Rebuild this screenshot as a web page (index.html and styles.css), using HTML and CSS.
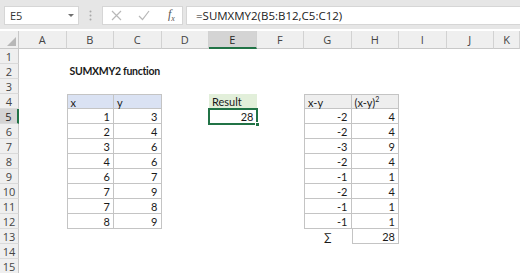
FILE: index.html
```html
<!DOCTYPE html>
<html lang="en">
<head>
  <meta charset="UTF-8" />
  <title>SUMXMY2 function</title>
  <link rel="stylesheet" href="styles.css">
</head>
<body>
  <div class="toolbar">
    <div class="namebox">
      <span>E5</span>
      <span class="caret"></span>
    </div>
    <svg class="grip" width="3" height="11" viewBox="0 0 3 11">
      <circle cx="1.5" cy="1.5" r="1" fill="#a8a8a8"/>
      <circle cx="1.5" cy="5.5" r="1" fill="#a8a8a8"/>
      <circle cx="1.5" cy="9.5" r="1" fill="#a8a8a8"/>
    </svg>
    <div class="fx-box">
      <svg width="11" height="11" viewBox="0 0 11 11">
        <path d="M1 1 L10 10 M10 1 L1 10" stroke="#b8b8b8" stroke-width="1.2" fill="none"/>
      </svg>
      <svg width="12" height="11" viewBox="0 0 12 11">
        <path d="M1 6 L4.5 9.5 L11 1" stroke="#b8b8b8" stroke-width="1.2" fill="none"/>
      </svg>
      <span class="fx">f<sub>x</sub></span>
    </div>
    <div class="formula">=SUMXMY2(B5:B12,C5:C12)</div>
  </div>

  <div class="sheet" id="sheet"></div>

  <script>
    const cols = ['A','B','C','D','E','F','G','H','I','J','K'];
    const B = [1,2,3,4,6,7,7,8];
    const C = [3,4,6,6,7,9,8,9];
    const cells = {
      B2: ['SUMXMY2 function','title'],
      B4: ['x','b head blue'], C4: ['y','b head blue'],
      E4: ['Result','head green'],
      E5: ['28','num sel'],
      G4: ['x-y','b head grey'], H4: ['(x-y)<sup>2</sup>','b head grey'],
      G13: ['&sum;','sum'], H13: ['28','b num']
    };
    B.forEach((x,i)=>{
      const r = i+5, y = C[i];
      cells['B'+r] = [x,'b num'];
      cells['C'+r] = [y,'b num'];
      cells['G'+r] = [x-y,'b num'];
      cells['H'+r] = [(x-y)*(x-y),'b num'];
    });
    const bordered = k => cells[k] && / b /.test(' '+cells[k][1]+' ');

    const sheet = document.getElementById('sheet');
    function add(cls, html){
      const d = document.createElement('div');
      d.className = cls;
      d.innerHTML = html;
      sheet.appendChild(d);
    }
    add('corner','');
    cols.forEach(c=>add('col-hd'+(c==='E'?' active':''), c));
    for(let r=1;r<=15;r++){
      add('row-hd'+(r===5?' active':''), r);
      cols.forEach((c,i)=>{
        const k = c+r, v = cells[k];
        let cls = 'cell';
        if(v){
          cls += ' '+v[1];
          if(bordered(k)){
            if(!bordered((cols[i-1]||'')+r)) cls += ' bl';
            if(!bordered(c+(r-1))) cls += ' bt';
          }
        }
        add(cls, v ? v[0] : '');
      });
    }
  </script>
</body>
</html>
```

FILE: styles.css
```css
html, body { margin: 0; }
body {
  width: 520px; height: 273px; overflow: hidden;
  background: #fff;
  font-family: 'Open Sans', 'Noto Sans', sans-serif;
  color: #222;
}

/* formula bar */
.toolbar {
  height: 29px;
  margin-bottom: 2px;
  background: #e6e6e6;
  display: flex; align-items: center;
  padding: 2px 0 0 4px;
  box-sizing: border-box;
}
.namebox {
  width: 75px; height: 19px;
  background: #fff; border: 1px solid #d6d6d6;
  box-sizing: border-box;
  display: flex; align-items: center; justify-content: space-between;
  padding: 0 4px 0 5px;
  font-size: 11px; color: #333;
}
.caret {
  width: 0; height: 0;
  border-left: 3px solid transparent;
  border-right: 3px solid transparent;
  border-top: 3px solid #707070;
}
.grip { margin: 0 10px 0 10px; }
.fx-box {
  width: 81px; height: 19px;
  background: #fff; border: 1px solid #d6d6d6;
  box-sizing: border-box;
  display: flex; align-items: center;
  padding: 0 0 0 8px; gap: 16px;
}
.fx {
  font-family: 'Liberation Serif', serif; font-style: italic;
  font-size: 12px; color: #555; margin-left: 2px;
}
.fx sub { font-size: 8px; }
.formula {
  flex: 1; height: 19px;
  margin-left: 3px;
  background: #fff; border: 1px solid #d6d6d6; border-right: none;
  box-sizing: border-box;
  padding: 0 0 0 9px;
  font-size: 11.5px; line-height: 17px; color: #222;
}

/* grid */
.sheet {
  display: grid;
  grid-template-columns: 19px repeat(10, 47.5px) 26px;
  grid-template-rows: 18px repeat(15, 15px);
}
.corner, .col-hd, .row-hd {
  background: #efefef; color: #444;
  font-size: 11px; text-align: center;
  box-sizing: border-box;
}
.corner {
  border-right: 1px solid #c8c8c8; border-bottom: 1px solid #c8c8c8;
  position: relative;
}
.corner::after {
  content: ''; position: absolute; right: 2px; bottom: 2px;
  border-left: 9px solid transparent;
  border-bottom: 9px solid #b7b7b7;
}
.col-hd {
  line-height: 17px;
  border-right: 1px solid #d2d2d2; border-bottom: 1px solid #c8c8c8;
}
.col-hd.active {
  background: #d4d4d4; color: #262626;
  border-bottom: 2px solid #217346;
}
.row-hd {
  line-height: 15px;
  border-right: 1px solid #c8c8c8; border-bottom: 1px solid #dadada;
}
.row-hd.active {
  background: #d4d4d4; color: #262626;
  border-right: 2px solid #217346;
}

.cell {
  font-family: Lato, 'Open Sans', sans-serif;
  font-size: 11px; line-height: 15px;
  padding: 0 3px;
  white-space: nowrap;
  box-sizing: border-box;
  color: #1a1a1a;
}
.cell.title {
  font-weight: bold; font-size: 10.5px;
  letter-spacing: -0.3px; overflow: visible;
}
.cell.num { text-align: right; }
.cell.sum { text-align: center; }
.cell sup { font-size: 7px; line-height: 0; }
.b {
  border-right: 1px solid #c4c4c4;
  border-bottom: 1px solid #c4c4c4;
}
.bl { border-left: 1px solid #c4c4c4; }
.bt { border-top: 1px solid #c4c4c4; }
.head.blue { background: #dae2f3; }
.head.green { background: #e2efda; }
.head.grey { background: #eeeeee; }

.sel { position: relative; }
.sel::before {
  content: ''; position: absolute;
  left: -1px; top: -1px; right: -1px; bottom: -1px;
  border: 2px solid #217346;
}
.sel::after {
  content: ''; position: absolute;
  right: -3px; bottom: -3px;
  width: 5px; height: 5px;
  background: #217346; border: 1px solid #fff;
  box-sizing: border-box;
}
```
